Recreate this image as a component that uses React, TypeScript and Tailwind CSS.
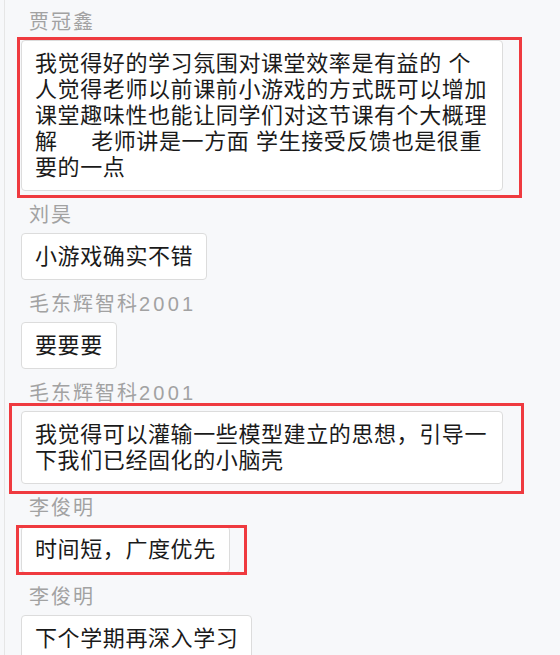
const messages = [
  {
    name: "贾冠鑫",
    lines: [
      "我觉得好的学习氛围对课堂效率是有益的 个",
      "人觉得老师以前课前小游戏的方式既可以增加",
      "课堂趣味性也能让同学们对这节课有个大概理",
      "解     老师讲是一方面 学生接受反馈也是很重",
      "要的一点",
    ],
    wide: true,
    mark: "left-[-4px] top-[-3px] right-[-19px] bottom-[-7px]",
  },
  { name: "刘昊", lines: ["小游戏确实不错"] },
  { name: "毛东辉智科", num: "2001", lines: ["要要要"] },
  {
    name: "毛东辉智科",
    num: "2001",
    lines: ["我觉得可以灌输一些模型建立的思想，引导一", "下我们已经固化的小脑壳"],
    wide: true,
    mark: "left-[-12px] top-[-8px] right-[-21px] bottom-[-10px]",
  },
  {
    name: "李俊明",
    lines: ["时间短，广度优先"],
    mark: "left-[-5px] top-[-1px] right-[-17px] bottom-[-2px]",
  },
  { name: "李俊明", lines: ["下个学期再深入学习"] },
];

const Bubble = ({ lines, wide, mark }: { lines: string[]; wide?: boolean; mark?: string }) => (
  <div className={`relative ${wide ? "w-[482px]" : "w-fit"}`}>
    <div className="rounded-[4px] border border-[#dcdcdc] bg-white px-[13px] py-[9.5px] text-[22px] leading-[26px] tracking-[0.6px] text-[#1a1a1a] whitespace-pre">
      {lines.map((l, i) => (
        <div key={i}>{l}</div>
      ))}
    </div>
    {mark && <div className={`absolute ${mark} border-[3px] border-[#ef3a3f] pointer-events-none`} />}
  </div>
);

export default function App() {
  return (
    <div
      className="h-[655px] w-[560px] overflow-hidden bg-[#f7f8fa] pl-[4px]"
      style={{ fontFamily: '"Liberation Sans", "Noto Sans CJK SC", sans-serif' }}
    >
      <div className="h-full border-l border-[#e6e6e6] pl-[16px] pt-[10px] flex flex-col gap-[12px]">
        {messages.map((m, i) => (
          <div key={i} className="flex flex-col">
            <div className="pl-[8px] h-[24px] mb-[6px] text-[20px] leading-[24px] tracking-[2px] text-[#a2a2a2]">
              {m.name}
              {m.num && <span className="tracking-[3.2px]">{m.num}</span>}
            </div>
            <Bubble lines={m.lines} wide={m.wide} mark={m.mark} />
          </div>
        ))}
      </div>
    </div>
  );
}
